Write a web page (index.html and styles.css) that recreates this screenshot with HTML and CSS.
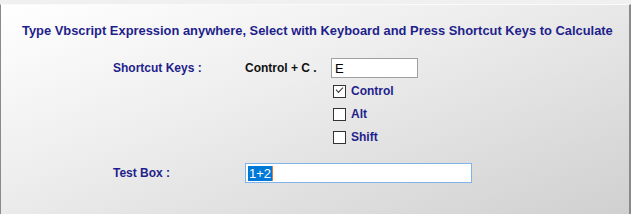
FILE: index.html
```html
<!DOCTYPE html>
<html lang="en">
<head>
  <meta charset="UTF-8">
  <title>Vbscript Calculator Settings</title>
  <link rel="stylesheet" href="styles.css">
</head>
<body>
  <div class="strip"></div>
  <div class="panel">
    <p class="title">Type Vbscript Expression anywhere, Select with Keyboard and Press Shortcut Keys to Calculate</p>

    <div class="form">
      <div class="label">Shortcut Keys :</div>
      <div class="keys">
        <div class="key-row">
          <span class="combo">Control + C .</span>
          <input class="key-input" type="text" value="E">
        </div>
        <label class="check"><span class="box checked"></span>Control</label>
        <label class="check"><span class="box"></span>Alt</label>
        <label class="check"><span class="box"></span>Shift</label>
      </div>

      <div class="label test-label">Test Box :</div>
      <div class="test">
        <div class="test-input"><span class="sel">1+2</span><span class="caret"></span></div>
      </div>
    </div>
  </div>
</body>
</html>
```

FILE: styles.css
```css
/* General Styles */
html, body {
  margin: 0;
  padding: 0;
  height: 214px;
  overflow: hidden;
  background: #f0f0f0;
  font-family: 'Liberation Sans', Arial, sans-serif;
}

.strip {
  height: 4px;
  background: #f0f0f0;
}

.panel {
  height: 210px;
  box-sizing: border-box;
  border-left: 1px solid #8a8a8a;
  border-right: 2px solid #8a8a8a;
  border-top: 1px solid #fafafa;
  background: linear-gradient(160deg, #ffffff 0%, #eeeeee 40%, #d0d0d0 100%);
  color: #1f1f8c;
  font-weight: bold;
  font-size: 12px;
}

.title {
  margin: 0;
  padding: 18px 0 0 21px;
  font-size: 12.9px;
  white-space: nowrap;
}

/* Form Styles */
.form {
  display: grid;
  grid-template-columns: 132px 1fr;
  padding: 20px 0 0 112px;
  row-gap: 18px;
}

.label {
  line-height: 20px;
}

.key-row {
  display: flex;
  align-items: center;
  height: 20px;
  margin-bottom: -2px;
}

.combo {
  width: 86px;
  color: #111;
}

.key-input {
  width: 87px;
  height: 20px;
  box-sizing: border-box;
  border: 1px solid #a0a0a0;
  padding: 1px 3px 0;
  font-family: 'Liberation Sans', Arial, sans-serif;
  font-size: 13px;
  color: #000;
  outline: none;
}

.check {
  display: flex;
  align-items: center;
  gap: 5px;
  margin: 7px 0 0 88px;
  height: 16px;
}

.box {
  width: 11px;
  height: 11px;
  border: 1px solid #333;
  background: #fff;
  position: relative;
}

.box.checked::after {
  content: "";
  position: absolute;
  left: 2px;
  top: 1px;
  width: 6px;
  height: 3px;
  border-left: 1px solid #333;
  border-bottom: 1px solid #333;
  transform: rotate(-45deg);
}

.test {
  display: flex;
}

.test-input {
  width: 227px;
  height: 20px;
  box-sizing: border-box;
  border: 1px solid #7eb4ea;
  background: #fff;
  display: flex;
  align-items: center;
  padding-left: 2px;
  font-size: 13px;
  font-weight: normal;
}

.sel {
  background: #0078d7;
  color: #fff;
  line-height: 15px;
  padding: 0 1px;
}

.caret {
  width: 1px;
  height: 15px;
  background: #e07b39;
}
```
